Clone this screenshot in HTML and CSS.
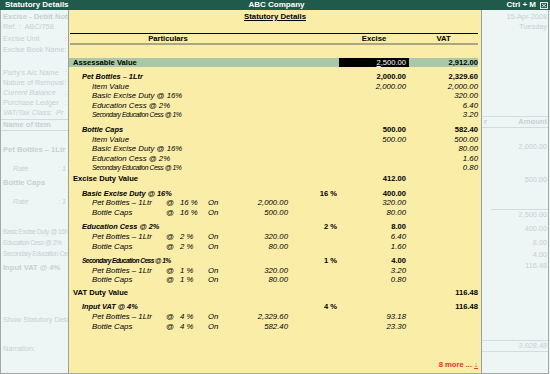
FILE: index.html
```html
<!DOCTYPE html>
<html lang="en">

<head>
    <meta charset="UTF-8">
    <title>Statutory Details</title>
    <link rel="stylesheet" href="styles.css">
</head>

<body>
    <header class="titlebar">
        <span class="tb-left">Statutory Details</span>
        <span class="tb-center">ABC Company</span>
        <span class="tb-right">Ctrl + M
            <svg class="close" width="8" height="7" viewBox="0 0 8 7">
                <rect x="0.5" y="0.5" width="7" height="6" fill="none" stroke="#dfe8e4" />
                <path d="M2 1.8 L6 5.2 M6 1.8 L2 5.2" stroke="#dfe8e4" stroke-width="1" />
            </svg>
        </span>
    </header>

    <div class="screen">
        <!-- voucher behind the window, faded -->
        <aside class="voucher-left">
            <div class="ln b first">Excise - Debit Note</div>
            <div class="ln">Ref. : &nbsp;ABC/758</div>
            <div class="ln g2"><span class="key">Excise Unit</span>:</div>
            <div class="ln g1"><span class="key">Excise Book Name</span>:</div>
            <div class="ln g13"><span class="key">Party's A/c Name</span>:</div>
            <div class="ln"><span class="key">Nature of Removal</span>:</div>
            <div class="ln i"><span class="key">Current Balance</span>:</div>
            <div class="ln"><span class="key">Purchase Ledger</span>:</div>
            <div class="ln i">VAT/Tax Class: &nbsp;Pr</div>
            <div class="rule g1"></div>
            <div class="ln b">Name of Item</div>
            <div class="rule"></div>
            <div class="ln b g14">Pet Bottles – 1Ltr</div>
            <div class="ln i g9 ind"><span class="rate">Rate</span>: 1</div>
            <div class="ln b g4">Bottle Caps</div>
            <div class="ln i g9 ind"><span class="rate">Rate</span>: 1</div>
            <div class="ln sm g19">Basic Excise Duty @ 16%</div>
            <div class="ln sm">Education Cess @ 2%</div>
            <div class="ln sm">Secondary Education Cess @ 1%</div>
            <div class="ln b g4">Input VAT @ 4%</div>
            <div class="ln g42">Show Statutory Details</div>
            <div class="ln g19">Narration:</div>
        </aside>

        <section class="stat">
            <h1 class="stat-title">Statutory Details</h1>
            <div class="head">
                <span class="h-part">Particulars</span>
                <span class="h-ex">Excise</span>
                <span class="h-vat">VAT</span>
            </div>

            <div class="row total">
                <span class="lbl b">Assessable Value</span>
                <span></span>
                <span class="ex"><span class="sel"><u>2</u>,500.00</span></span>
                <span class="vat b">2,912.00</span>
            </div>

            <div class="row grp">
                <span class="lbl l1 bi">Pet Bottles – 1Ltr</span>
                <span></span>
                <span class="ex b">2,000.00</span>
                <span class="vat b">2,329.60</span>
            </div>
            <div class="row">
                <span class="lbl l2 i">Item Value</span>
                <span></span>
                <span class="ex i">2,000.00</span>
                <span class="vat i">2,000.00</span>
            </div>
            <div class="row">
                <span class="lbl l2 i">Basic Excise Duty @ 16%</span>
                <span></span><span></span>
                <span class="vat i">320.00</span>
            </div>
            <div class="row">
                <span class="lbl l2 i">Education Cess @ 2%</span>
                <span></span><span></span>
                <span class="vat i">6.40</span>
            </div>
            <div class="row">
                <span class="lbl l2 i sm">Secondary Education Cess @ 1%</span>
                <span></span><span></span>
                <span class="vat i">3.20</span>
            </div>

            <div class="row grp">
                <span class="lbl l1 bi">Bottle Caps</span>
                <span></span>
                <span class="ex b">500.00</span>
                <span class="vat b">582.40</span>
            </div>
            <div class="row">
                <span class="lbl l2 i">Item Value</span>
                <span></span>
                <span class="ex i">500.00</span>
                <span class="vat i">500.00</span>
            </div>
            <div class="row">
                <span class="lbl l2 i">Basic Excise Duty @ 16%</span>
                <span></span><span></span>
                <span class="vat i">80.00</span>
            </div>
            <div class="row">
                <span class="lbl l2 i">Education Cess @ 2%</span>
                <span></span><span></span>
                <span class="vat i">1.60</span>
            </div>
            <div class="row">
                <span class="lbl l2 i sm">Secondary Education Cess @ 1%</span>
                <span></span><span></span>
                <span class="vat i">0.80</span>
            </div>

            <div class="row sec">
                <span class="lbl b">Excise Duty Value</span>
                <span></span>
                <span class="ex b">412.00</span>
                <span></span>
            </div>

            <div class="row grp">
                <span class="lbl l1 bi">Basic Excise Duty @ 16%</span>
                <span class="pct b">16 %</span>
                <span class="ex b">400.00</span>
                <span></span>
            </div>
            <div class="row">
                <span class="det i"><span>Pet Bottles – 1Ltr</span><span>@</span><span>16 %</span><span>On</span><span class="amt">2,000.00</span></span>
                <span></span>
                <span class="ex i">320.00</span>
                <span></span>
            </div>
            <div class="row">
                <span class="det i"><span>Bottle Caps</span><span>@</span><span>16 %</span><span>On</span><span class="amt">500.00</span></span>
                <span></span>
                <span class="ex i">80.00</span>
                <span></span>
            </div>

            <div class="row grp">
                <span class="lbl l1 bi">Education Cess @ 2%</span>
                <span class="pct b">2 %</span>
                <span class="ex b">8.00</span>
                <span></span>
            </div>
            <div class="row">
                <span class="det i"><span>Pet Bottles – 1Ltr</span><span>@</span><span>2 %</span><span>On</span><span class="amt">320.00</span></span>
                <span></span>
                <span class="ex i">6.40</span>
                <span></span>
            </div>
            <div class="row">
                <span class="det i"><span>Bottle Caps</span><span>@</span><span>2 %</span><span>On</span><span class="amt">80.00</span></span>
                <span></span>
                <span class="ex i">1.60</span>
                <span></span>
            </div>

            <div class="row grp">
                <span class="lbl l1 bi sm">Secondary Education Cess @ 1%</span>
                <span class="pct b">1 %</span>
                <span class="ex b">4.00</span>
                <span></span>
            </div>
            <div class="row">
                <span class="det i"><span>Pet Bottles – 1Ltr</span><span>@</span><span>1 %</span><span>On</span><span class="amt">320.00</span></span>
                <span></span>
                <span class="ex i">3.20</span>
                <span></span>
            </div>
            <div class="row">
                <span class="det i"><span>Bottle Caps</span><span>@</span><span>1 %</span><span>On</span><span class="amt">80.00</span></span>
                <span></span>
                <span class="ex i">0.80</span>
                <span></span>
            </div>

            <div class="row sec vat-sec">
                <span class="lbl b">VAT Duty Value</span>
                <span></span><span></span>
                <span class="vat b">116.48</span>
            </div>

            <div class="row grp">
                <span class="lbl l1 bi">Input VAT @ 4%</span>
                <span class="pct b">4 %</span>
                <span></span>
                <span class="vat b">116.48</span>
            </div>
            <div class="row">
                <span class="det i"><span>Pet Bottles – 1Ltr</span><span>@</span><span>4 %</span><span>On</span><span class="amt">2,329.60</span></span>
                <span></span>
                <span class="ex i">93.18</span>
                <span></span>
            </div>
            <div class="row">
                <span class="det i"><span>Bottle Caps</span><span>@</span><span>4 %</span><span>On</span><span class="amt">582.40</span></span>
                <span></span>
                <span class="ex i">23.30</span>
                <span></span>
            </div>

            <div class="more">8 more ... <span class="arrow">↓</span></div>
        </section>

        <aside class="voucher-right">
            <div class="ln first">15-Apr-2008</div>
            <div class="ln">Tuesday</div>
            <div class="rule g84"></div>
            <div class="ln b split"><span>r</span><span>Amount</span></div>
            <div class="rule"></div>
            <div class="ln g14">2,000.00</div>
            <div class="ln g23">500.00</div>
            <div class="rule short g24"></div>
            <div class="ln">2,500.00</div>
            <div class="ln g4">400.00</div>
            <div class="ln g4">8.00</div>
            <div class="ln g2">4.00</div>
            <div class="ln g1">116.48</div>
            <div class="rule g69"></div>
            <div class="ln i">3,028.48</div>
            <div class="rule"></div>
        </aside>
    </div>
</body>

</html>
```

FILE: styles.css
```css
/* General */
body {
    margin: 0;
    width: 550px;
    height: 374px;
    overflow: hidden;
    font-family: "Liberation Sans", Arial, sans-serif;
    background: #edf5f5;
    color: #000;
}

/* Title bar */
.titlebar {
    height: 10px;
    display: grid;
    grid-template-columns: 1fr auto 1fr;
    align-items: center;
    padding: 0 2px 0 5px;
    background: #1f5a4b;
    color: #fff;
    font-size: 8px;
    font-weight: bold;
    line-height: 10px;
    white-space: nowrap;
}

.tb-right {
    justify-self: end;
    display: flex;
    align-items: center;
    gap: 4px;
}

.close {
    display: block;
}

/* Screen area */
.screen {
    display: flex;
    width: 547px;
    height: 363px;
    border: 1px solid #a3a9a9;
    border-top: none;
}

.voucher-left,
.voucher-right {
    color: #c7d1d1;
    font-size: 7.3px;
    white-space: nowrap;
    overflow: hidden;
}

.voucher-left {
    width: 67px;
}

.voucher-right {
    width: 66px;
    text-align: right;
}

.ln {
    height: 10px;
    line-height: 10px;
    padding: 0 1px 0 2px;
}

.voucher-left .ln.first,
.voucher-right .ln.first {
    margin-top: 2px;
}

.key {
    display: inline-block;
    width: 62px;
}

.ind {
    padding-left: 12px;
}

.rate {
    display: inline-block;
    width: 45px;
}

.rule {
    height: 1px;
    background: #d3dcdc;
}

.rule.short {
    margin-left: 9px;
}

.split {
    display: flex;
    justify-content: space-between;
}

.voucher-left .sm {
    height: 11px;
    line-height: 11px;
    font-size: 6.6px;
    letter-spacing: -0.4px;
}

.g1 { margin-top: 1px; }
.g2 { margin-top: 2px; }
.g4 { margin-top: 4px; }
.g9 { margin-top: 9px; }
.g13 { margin-top: 13px; }
.g14 { margin-top: 14px; }
.g19 { margin-top: 19px; }
.g23 { margin-top: 23px; }
.g24 { margin-top: 24px; }
.g42 { margin-top: 42px; }
.g69 { margin-top: 69px; }
.g84 { margin-top: 84px; }

/* Statutory details window */
.stat {
    width: 414px;
    box-sizing: border-box;
    display: flex;
    flex-direction: column;
    padding: 0 3px 3px 0;
    border-left: 1px solid #9a9f9f;
    border-right: 1px solid #9a9f9f;
    background: #f9eda8;
    font-size: 7.8px;
    white-space: nowrap;
}

.stat-title {
    margin: 2px 0 0 3px;
    height: 10px;
    line-height: 10px;
    font-size: 7.8px;
    text-align: center;
    text-decoration: underline;
}

.head {
    display: grid;
    grid-template-columns: 196px 1fr 70px 69px;
    height: 9px;
    margin: 11px 0 0 1px;
    border-top: 1px solid #000;
    border-bottom: 2px solid #a9a585;
    line-height: 9px;
    font-size: 7.7px;
    font-weight: bold;
    text-align: center;
}

.h-ex {
    grid-column: 3;
}

.row {
    display: grid;
    grid-template-columns: 228px 40px 72px 69px;
    height: 9.6px;
    line-height: 9.6px;
}

.row.total {
    height: 9px;
    line-height: 9px;
    margin-top: 13px;
    background: #a8c8a8;
}

.row.grp {
    margin-top: 5px;
}

.row.sec {
    margin-top: 1px;
}

.row.vat-sec {
    margin-top: 3px;
}

.lbl {
    padding-left: 4px;
}

.lbl.l1 {
    padding-left: 13px;
}

.lbl.l2 {
    padding-left: 23px;
}

.pct {
    text-align: right;
}

.ex {
    text-align: right;
    padding-right: 3px;
}

.vat {
    text-align: right;
}

.sel {
    display: block;
    margin: 0 -3px 0 2px;
    padding-right: 3px;
    background: #000;
    color: #fff;
    font-size: 7.6px;
}

.det {
    display: grid;
    grid-template-columns: 74px 14px 28px 20px 60px;
    padding-left: 23px;
}

.amt {
    text-align: right;
}

.b {
    font-weight: bold;
    font-size: 7.6px;
}

.i {
    font-style: italic;
}

.bi {
    font-weight: bold;
    font-style: italic;
    font-size: 7.4px;
}

.stat .sm {
    font-size: 6.8px;
    letter-spacing: -0.45px;
}

.stat .bi.sm {
    font-size: 6.6px;
    letter-spacing: -0.55px;
}

.more {
    margin-top: auto;
    height: 10px;
    line-height: 10px;
    text-align: right;
    color: #e8312b;
    font-weight: bold;
    font-size: 7.6px;
}

.arrow {
    font-weight: normal;
    text-decoration: underline;
}
```
